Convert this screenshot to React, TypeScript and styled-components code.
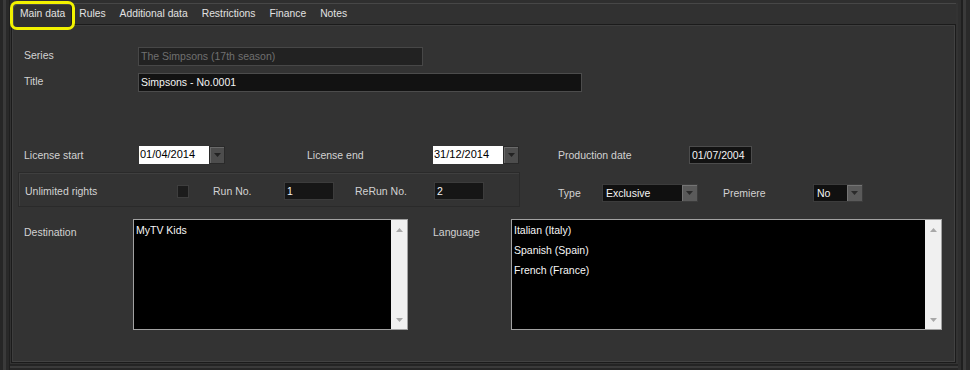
import React from 'react';
import styled, {createGlobalStyle} from 'styled-components';

const TABS = ['Main data', 'Rules', 'Additional data', 'Restrictions', 'Finance', 'Notes'];
const LANGUAGES = ['Italian (Italy)', 'Spanish (Spain)', 'French (France)'];

const Arrow: React.FC<{up?: boolean}> = ({up}) => (
    <svg width="7" height="4" viewBox="0 0 7 4">
        <path d={up ? 'M0 4h7L3.5 0z' : 'M0 0h7L3.5 4z'} fill="currentColor"/>
    </svg>
);

const DatePicker: React.FC<{value: string}> = ({value}) => (
    <StyledPicker>
        <StyledDateBox>{value}</StyledDateBox>
        <StyledDropButton><Arrow/></StyledDropButton>
    </StyledPicker>
);

const Select: React.FC<{value: string, w: number}> = ({value, w}) => (
    <StyledSelect $w={w}>
        <span>{value}</span>
        <StyledSelectButton><Arrow/></StyledSelectButton>
    </StyledSelect>
);

const ListBox: React.FC<{items: string[], w: number}> = ({items, w}) => (
    <StyledList $w={w}>
        <StyledItems>
            {items.map((item) => <StyledItem key={item}>{item}</StyledItem>)}
        </StyledItems>
        <StyledScroll>
            <Arrow up/>
            <Arrow/>
        </StyledScroll>
    </StyledList>
);

const App: React.FC = () => {
    return (
        <>
            <GlobalStyle/>
            <StyledShell>
                <StyledTabBar>
                    {TABS.map((tab, i) => (
                        <StyledTab key={tab} $active={i === 0}>{tab}</StyledTab>
                    ))}
                </StyledTabBar>
                <StyledPanel>
                    <StyledRow $mt={22}>
                        <StyledLabel $w={114} $pb={3}>Series</StyledLabel>
                        <StyledTextBox $w={285} $tone="disabled">The Simpsons (17th season)</StyledTextBox>
                    </StyledRow>
                    <StyledRow $mt={7}>
                        <StyledLabel $w={114} $pb={4}>Title</StyledLabel>
                        <StyledTextBox $w={444} $tone="dark">Simpsons - No.0001</StyledTextBox>
                    </StyledRow>
                    <StyledRow $mt={54}>
                        <StyledLabel $w={115}>License start</StyledLabel>
                        <DatePicker value="01/04/2014"/>
                        <StyledLabel $w={126} $ml={82}>License end</StyledLabel>
                        <DatePicker value="31/12/2014"/>
                        <StyledLabel $w={131} $ml={39}>Production date</StyledLabel>
                        <StyledTextBox $w={63} $tone="dark" $h={18}>01/07/2004</StyledTextBox>
                    </StyledRow>
                    <StyledRow $mt={8} $flat>
                        <StyledGroup>
                            <StyledLabel $w={152}>Unlimited rights</StyledLabel>
                            <StyledCheck/>
                            <StyledLabel $w={71} $ml={24}>Run No.</StyledLabel>
                            <StyledTextBox $w={50} $tone="field" $h={18}>1</StyledTextBox>
                            <StyledLabel $w={79} $ml={21}>ReRun No.</StyledLabel>
                            <StyledTextBox $w={50} $tone="field" $h={18}>2</StyledTextBox>
                        </StyledGroup>
                        <StyledSide>
                            <StyledLabel $w={44} $ml={38}>Type</StyledLabel>
                            <Select value="Exclusive" w={96}/>
                            <StyledLabel $w={90} $ml={25}>Premiere</StyledLabel>
                            <Select value="No" w={50}/>
                        </StyledSide>
                    </StyledRow>
                    <StyledRow $mt={12} $top>
                        <StyledLabel $w={109} $pt={7}>Destination</StyledLabel>
                        <ListBox items={['MyTV Kids']} w={275}/>
                        <StyledLabel $w={78} $ml={25} $pt={7}>Language</StyledLabel>
                        <ListBox items={LANGUAGES} w={431}/>
                    </StyledRow>
                </StyledPanel>
            </StyledShell>
        </>
    );
}

const GlobalStyle = createGlobalStyle`
  html, body {
    margin: 0;
    padding: 0;
    background: #2b2b2b;
  }
  body {
    font-family: "Liberation Sans", Arial, sans-serif;
    font-size: 10.5px;
  }
`;

const StyledShell = styled.div`
  width: 970px;
  height: 370px;
  box-sizing: border-box;
  display: flex;
  flex-direction: column;
  padding: 3px 14px 7px 11px;
  background: #333;
  box-shadow:
    inset 3px 0 0 #262626,
    inset 6px 0 0 #3a3a3a,
    inset 9px 0 0 #292929,
    inset 10px 0 0 #1e1e1e,
    inset -4px 0 0 #2a2a2a,
    inset -7px 0 0 #3a3a3a,
    inset -9px 0 0 #1f1f1f,
    inset -12px 0 0 #2e2e2e,
    inset 0 -2px 0 #262626,
    inset 0 -4px 0 #3a3a3a,
    inset 0 -6px 0 #242424,
    inset 0 3px 0 #2f2f2f;
`;

const StyledTabBar = styled.div`
  display: flex;
  align-items: flex-start;
  height: 20px;
  padding-left: 2px;
  border-top: 1px solid #474747;
  background: #313131;
`;

const StyledTab = styled.div<{$active?: boolean}>`
  position: relative;
  z-index: 2;
  height: ${(p) => (p.$active ? '23px' : '20px')};
  line-height: 20px;
  padding: 0 7px;
  font-size: 10.3px;
  color: #e2e2e2;
  white-space: nowrap;
  background: ${(p) => (p.$active ? '#303030' : 'transparent')};
  border-radius: ${(p) => (p.$active ? '4px' : '0')};
  outline: ${(p) => (p.$active ? '3px solid #f2f200' : 'none')};
  box-shadow: ${(p) => (p.$active ? 'inset 1px 1px 0 #4a4a4a, inset -1px 0 0 #1c1c1c' : 'none')};
`;

const StyledPanel = styled.div`
  flex: 1;
  display: flex;
  flex-direction: column;
  padding-left: 6px;
  border: 1px solid #1b1b1b;
  background: #333;
  box-shadow: inset 1px 1px 0 #3e3e3e, inset -1px -1px 0 #424242;
`;

const StyledRow = styled.div<{$mt: number, $flat?: boolean, $top?: boolean}>`
  display: flex;
  align-items: ${(p) => (p.$top || p.$flat ? 'flex-start' : 'center')};
  margin-top: ${(p) => p.$mt}px;
  padding-left: ${(p) => (p.$flat ? 0 : 6)}px;
`;

const StyledLabel = styled.span<{$w: number, $ml?: number, $pt?: number, $pb?: number}>`
  flex-shrink: 0;
  width: ${(p) => p.$w}px;
  margin-left: ${(p) => p.$ml || 0}px;
  padding-top: ${(p) => p.$pt || 0}px;
  padding-bottom: ${(p) => p.$pb || 0}px;
  color: #d2d2d2;
  white-space: nowrap;
`;

const TONES = {
    disabled: {bg: '#222', border: '#474747', color: '#707070'},
    dark: {bg: '#121212', border: '#4c4c4c', color: '#f4f4f4'},
    field: {bg: '#161616', border: '#3c3c3c', color: '#f4f4f4'},
};

const StyledTextBox = styled.div<{$w: number, $h?: number, $tone: keyof typeof TONES}>`
  box-sizing: border-box;
  flex-shrink: 0;
  width: ${(p) => p.$w}px;
  height: ${(p) => p.$h || 19}px;
  line-height: ${(p) => (p.$h || 19) - 2}px;
  padding: 0 2px;
  background: ${(p) => TONES[p.$tone].bg};
  border: 1px solid ${(p) => TONES[p.$tone].border};
  color: ${(p) => TONES[p.$tone].color};
  white-space: nowrap;
  overflow: hidden;
`;

const StyledPicker = styled.div`
  display: flex;
  flex-shrink: 0;
`;

const StyledDateBox = styled.div`
  box-sizing: border-box;
  width: 70px;
  height: 18px;
  line-height: 17px;
  padding-left: 1px;
  background: #fff;
  color: #000;
  font-size: 11px;
`;

const StyledDropButton = styled.div`
  box-sizing: border-box;
  display: flex;
  align-items: center;
  justify-content: center;
  width: 16px;
  height: 18px;
  background: #4d4d4d;
  border: 1px solid #2a2a2a;
  box-shadow: inset 1px 1px 0 #6a6a6a;
  color: #222;
`;

const StyledGroup = styled.div`
  box-sizing: border-box;
  display: flex;
  align-items: center;
  width: 502px;
  height: 35px;
  padding: 3px 0 0 6px;
  border: 1px solid #2a2a2a;
  box-shadow: inset 1px 1px 0 #3f3f3f;
`;

const StyledCheck = styled.div`
  box-sizing: border-box;
  flex-shrink: 0;
  width: 12px;
  height: 13px;
  background: #1c1c1c;
  border: 1px solid #3e3e3e;
`;

const StyledSide = styled.div`
  display: flex;
  align-items: center;
  margin-top: 12px;
`;

const StyledSelect = styled.div<{$w: number}>`
  box-sizing: border-box;
  display: flex;
  align-items: center;
  flex-shrink: 0;
  width: ${(p) => p.$w}px;
  height: 18px;
  padding-left: 3px;
  background: #101010;
  border: 1px solid #3c3c3c;
  color: #f4f4f4;
  span {
    flex: 1;
  }
`;

const StyledSelectButton = styled.div`
  display: flex;
  align-items: center;
  justify-content: center;
  width: 15px;
  height: 16px;
  background: #5a5a5a;
  box-shadow: inset 1px 1px 0 #747474;
  color: #2a2a2a;
`;

const StyledList = styled.div<{$w: number}>`
  box-sizing: border-box;
  display: flex;
  flex-shrink: 0;
  width: ${(p) => p.$w}px;
  height: 111px;
  background: #000;
  border: 1px solid #a2a2a2;
`;

const StyledItems = styled.div`
  flex: 1;
  padding-left: 2px;
`;

const StyledItem = styled.div`
  height: 20px;
  line-height: 20px;
  color: #f6f6f6;
  white-space: nowrap;
`;

const StyledScroll = styled.div`
  display: flex;
  flex-direction: column;
  align-items: center;
  justify-content: space-between;
  width: 16px;
  padding: 8px 0 7px;
  box-sizing: border-box;
  background: #f0f0f0;
  color: #a8a8a8;
`;

export default App;
